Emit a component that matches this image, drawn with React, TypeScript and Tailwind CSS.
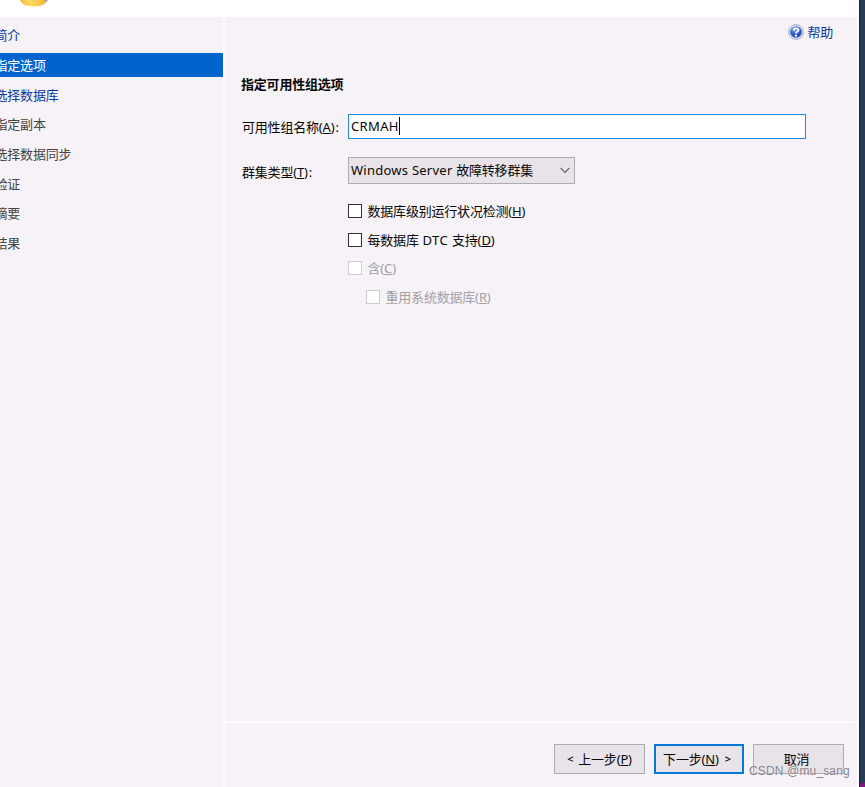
import type { ReactNode } from 'react';

const steps = [
  { label: '简介', tone: 'text-[#0c38a4]' },
  { label: '指定选项', tone: 'bg-[#0064ce] text-white' },
  { label: '选择数据库', tone: 'text-[#0c38a4]' },
  { label: '指定副本', tone: 'text-[#444444]' },
  { label: '选择数据同步', tone: 'text-[#444444]' },
  { label: '验证', tone: 'text-[#444444]' },
  { label: '摘要', tone: 'text-[#444444]' },
  { label: '结果', tone: 'text-[#444444]' },
];

function Key({ children }: { children: ReactNode }) {
  return (
    <span className="tracking-[-0.15px]">
      (<span className="underline decoration-1 underline-offset-1">{children}</span>)
    </span>
  );
}

function Check({ label, k, disabled = false, className = '' }: { label: ReactNode; k: string; disabled?: boolean; className?: string }) {
  return (
    <label className={`flex h-[28.6px] items-center ${className} ${disabled ? 'text-[#a3a1a4]' : 'text-[#080808]'}`}>
      <span className={`mr-[6px] h-[14px] w-[14px] border bg-white ${disabled ? 'border-[#cfcdd0]' : 'border-[#333]'}`} />
      <span className="whitespace-pre">{label}<Key>{k}</Key></span>
    </label>
  );
}

function HelpIcon() {
  return (
    <svg width="16" height="16" viewBox="0 0 16 16">
      <defs>
        <radialGradient id="ball" cx="0.4" cy="0.25" r="0.8">
          <stop offset="0" stopColor="#8fb4f4" />
          <stop offset="0.5" stopColor="#2c62d2" />
          <stop offset="1" stopColor="#1644ac" />
        </radialGradient>
      </defs>
      <circle cx="8" cy="8" r="7.4" fill="#dce3ee" stroke="#a4afc2" strokeWidth="1" />
      <circle cx="8" cy="8" r="5.8" fill="url(#ball)" />
      <path d="M5.7 6.4C5.7 3.6 10.5 3.6 10.5 6.3C10.5 7.9 8.1 7.8 8 9.5" fill="none" stroke="#fff" strokeWidth="1.8" />
      <circle cx="8" cy="11.7" r="1.1" fill="#fff" />
    </svg>
  );
}

export default function App() {
  return (
    <div className="relative flex h-[787px] w-[865px] overflow-hidden bg-white font-['Noto_Sans','Noto_Sans_CJK_SC',sans-serif] text-[13px] leading-[18px] tracking-[-0.2px] text-[#080808]">
      <div className="flex w-[859px] flex-col">
        <header className="h-[17px] shrink-0 overflow-hidden bg-white">
          <svg width="60" height="8" viewBox="0 0 60 8">
            <defs>
              <linearGradient id="gold" x1="0" x2="1">
                <stop offset="0" stopColor="#f2b632" />
                <stop offset="0.35" stopColor="#ffdb64" />
                <stop offset="0.8" stopColor="#fac443" />
                <stop offset="1" stopColor="#e0a238" />
              </linearGradient>
            </defs>
            <path d="M20 0H47C45.5 3.5 42 6.2 37 6.2H30C25 6.2 21.5 3.5 20 0Z" fill="url(#gold)" />
            <path d="M45.5 0H48L46 2Z" fill="#8796aa" />
          </svg>
        </header>
        <div className="flex min-h-0 grow">
          <nav className="w-[223px] shrink-0 bg-[#f6f2f7] pt-[3.4px]">
            {steps.map((s) => (
              <div key={s.label} className="flex h-[29.67px] items-center">
                <div className={`flex h-[23.5px] w-full items-center ${s.tone}`}>
                  <span className="-ml-[5.5px] whitespace-nowrap">{s.label}</span>
                </div>
              </div>
            ))}
          </nav>
          <div className="w-[2px] shrink-0 bg-white" />
          <main className="mr-[2px] flex w-[632px] flex-col bg-[#f6f2f7]">
            <div className="flex h-[31px] items-center justify-end gap-[3px] pb-[2px] pr-[24px] text-[#0c38a4]">
              <HelpIcon />
              <span>帮助</span>
            </div>
            <h1 className="mt-[27px] h-[18px] pl-[16px] font-bold">指定可用性组选项</h1>
            <div className="mt-[20px] flex h-[26px] items-center pl-[17px]">
              <label className="w-[106px] whitespace-nowrap pt-[2px]">可用性组名称<Key>A</Key><span className="pl-px">:</span></label>
              <div className="flex h-[25px] w-[458px] items-center border border-[#2588dc] bg-white pl-[2px]">
                <span className="tracking-[0.35px]">CRMAH</span>
                <span className="h-[18px] w-px bg-black" />
              </div>
            </div>
            <div className="mt-[17px] flex h-[28px] items-center pl-[17px]">
              <label className="w-[106px] whitespace-nowrap pt-[4px]">群集类型<Key>T</Key><span className="pl-px">:</span></label>
              <div className="flex h-[27px] w-[227px] items-center justify-between border border-[#adabae] bg-[#e7e3e8] pl-[2px] pr-[4px]">
                <span className="whitespace-pre"><span className="tracking-[0.25px]">Windows Server </span>故障转移群集</span>
                <svg width="10" height="7" viewBox="0 0 10 7" fill="none" stroke="#666" strokeWidth="1.2"><path d="M0.7 1L5 5.3L9.3 1" /></svg>
              </div>
            </div>
            <div className="mt-[13px] flex flex-col pl-[122.5px]">
              <Check label="数据库级别运行状况检测" k="H" />
              <Check label={<>每数据库<span className="tracking-[0.45px]"> DTC </span>支持</>} k="D" />
              <Check label="含" k="C" disabled />
              <Check label="重用系统数据库" k="R" disabled className="ml-[18px]" />
            </div>
            <footer className="mt-auto flex h-[66px] justify-end gap-[9px] border-t-2 border-white/80 pr-[13px] pt-[21px]">
              <button className="flex h-[30px] w-[91px] items-center justify-center gap-[5px] border border-[#adabae] bg-[#e7e3e8] pb-px"><span className="text-[11px] font-semibold">&lt;</span><span>上一步<Key>P</Key></span></button>
              <button className="flex h-[30px] w-[90px] items-center justify-center gap-[6px] border-2 border-[#0878d7] bg-[#e7e3e8] pb-px pr-[4px]"><span>下一步<Key>N</Key></span><span className="text-[11px] font-semibold">&gt;</span></button>
              <button className="flex h-[30px] w-[91px] items-center justify-center border border-[#adabae] bg-[#e7e3e8] pb-px pr-1">取消</button>
            </footer>
          </main>
        </div>
      </div>
      <aside className="flex w-[6px] flex-col border-l border-[#172238] bg-[#293a57]">
        <div className="mt-auto h-[4px] bg-[#7b197f]" />
      </aside>
      <span className="absolute left-[749px] top-[762px] whitespace-nowrap font-['Liberation_Sans',sans-serif] text-[12px] tracking-[0.15px] text-[#858389] [text-shadow:0_0_1px_white]">CSDN @mu_sang</span>
    </div>
  );
}
